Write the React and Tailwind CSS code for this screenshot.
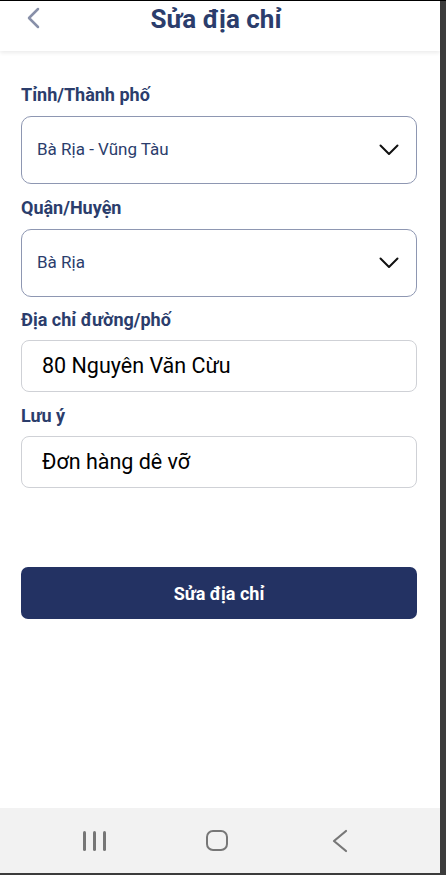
import React from "react";

const Label = ({ children, className = "" }) => (
  <div className={`text-[18px] font-bold text-[#2b3d6c] leading-[22px] ${className}`}>{children}</div>
);

const Chevron = () => (
  <svg width="20" height="12" viewBox="0 0 20 12" fill="none">
    <path d="M1.5 1.5 10 10 18.5 1.5" stroke="#111" strokeWidth="2" strokeLinecap="round" strokeLinejoin="round" />
  </svg>
);

const SelectBox = ({ value }) => (
  <div className="mt-[10px] h-[68px] rounded-[10px] border border-[#8e97b2] flex items-center justify-between pl-[15px] pr-[17px]">
    <span className="text-[17px] text-[#2b3d6c]">{value}</span>
    <Chevron />
  </div>
);

const TextBox = ({ value }) => (
  <div className="mt-[9px] h-[52px] rounded-[8px] border border-[#cfd1d6] flex items-center pl-[20px]">
    <span className="text-[21.5px] text-black">{value}</span>
  </div>
);

export default function App() {
  return (
    <div className="h-[875px] w-[446px] bg-[#3c3c3c] flex flex-col font-['Roboto','Noto_Sans',sans-serif]">
      <div className="h-px bg-black" />
      <div className="w-[440px] flex-1 bg-white flex flex-col">
        <header className="h-[50px] relative flex justify-center shadow-[0_2px_4px_rgba(0,0,0,0.08)]">
          <svg width="14" height="22" viewBox="0 0 14 22" fill="none" className="absolute left-[26px] top-[6px]">
            <path d="M12 2 3 11l9 9" stroke="#8890a9" strokeWidth="2.5" strokeLinecap="round" strokeLinejoin="round" />
          </svg>
          <h1 className="text-[26px] leading-[36px] font-bold text-[#2b3d6c] translate-x-[-4px]">Sửa địa chỉ</h1>
        </header>

        <main className="pl-[21px] pr-[23px] pt-[33px]">
          <Label>Tỉnh/Thành phố</Label>
          <SelectBox value="Bà Rịa - Vũng Tàu" />

          <Label className="mt-[13px]">Quận/Huyện</Label>
          <SelectBox value="Bà Rịa" />

          <Label className="mt-[12px]">Địa chỉ đường/phố</Label>
          <TextBox value="80 Nguyên Văn Cừu" />

          <Label className="mt-[13px]">Lưu ý</Label>
          <TextBox value="Đơn hàng dê vỡ" />

          <button className="mt-[79px] w-full h-[52px] rounded-[7px] bg-[#233263] text-white text-[18px] font-bold">
            Sửa địa chỉ
          </button>
        </main>

        <div className="flex-1" />

        <nav className="h-[65px] bg-[#f2f2f2] flex items-center pl-[83px]">
          <div className="flex gap-[7px] h-[20px]">
            <span className="w-[3px] rounded-full bg-[#777]" />
            <span className="w-[3px] rounded-full bg-[#777]" />
            <span className="w-[3px] rounded-full bg-[#777]" />
          </div>
          <div className="ml-[100px] w-[22px] h-[21px] rounded-[7px] border-[2.5px] border-[#777]" />
          <svg width="16" height="24" viewBox="0 0 16 24" fill="none" className="ml-[104px]">
            <path d="M14 2 2 12l12 10" stroke="#777" strokeWidth="2.2" strokeLinecap="round" strokeLinejoin="round" />
          </svg>
        </nav>
      </div>
      <div className="h-[2px]" />
    </div>
  );
}
